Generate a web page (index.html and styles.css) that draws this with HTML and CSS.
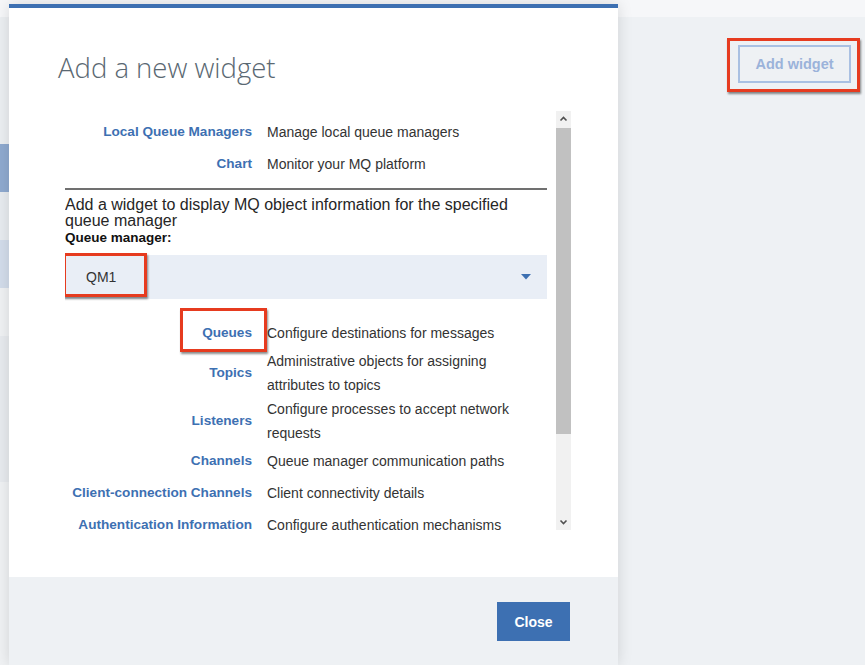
FILE: index.html
```html
<!DOCTYPE html>
<html lang="en">
<head>
<meta charset="utf-8">
<title>Add a new widget</title>
<link rel="stylesheet" href="styles.css">
</head>
<body>
<div class="page">
  <div class="topbar"></div>
  <div class="main">
    <nav class="sidebar">
      <div class="nav-item nav-top"></div>
      <div class="nav-item nav-active"></div>
      <div class="nav-item"></div>
      <div class="nav-item nav-hover"></div>
      <div class="nav-item nav-light"></div>
      <div class="nav-item nav-tall"></div>
      <div class="nav-item nav-light nav-rest"></div>
    </nav>
    <div class="dashboard">
      <div class="toolbar">
        <div class="callout-wrap">
          <button class="btn-ghost" type="button">Add widget</button>
        </div>
      </div>
    </div>
  </div>
</div>

<div class="modal">
  <div class="modal-body">
    <h1 class="modal-title">Add a new widget</h1>
    <div class="scroll-area">
      <div class="scroll-content">
        <div class="row"><a class="label">Local Queue Managers</a><span class="desc">Manage local queue managers</span></div>
        <div class="row"><a class="label">Chart</a><span class="desc">Monitor your MQ platform</span></div>
        <hr class="divider">
        <p class="intro">Add a widget to display MQ object information for the specified queue manager</p>
        <div class="field-label">Queue manager:</div>
        <div class="select">
          <span class="select-value">QM1</span>
          <svg class="caret" width="10" height="6" viewBox="0 0 10 6"><polygon points="0,0 10,0 5,5.5" fill="#3d70b2"/></svg>
          <span class="callout callout-qm"></span>
        </div>
        <div class="rows">
          <div class="row"><a class="label">Queues</a><span class="desc">Configure destinations for messages</span><span class="callout callout-queues"></span></div>
          <div class="row"><a class="label">Topics</a><span class="desc">Administrative objects for assigning attributes to topics</span></div>
          <div class="row"><a class="label">Listeners</a><span class="desc">Configure processes to accept network requests</span></div>
          <div class="row"><a class="label">Channels</a><span class="desc">Queue manager communication paths</span></div>
          <div class="row"><a class="label">Client-connection Channels</a><span class="desc">Client connectivity details</span></div>
          <div class="row"><a class="label">Authentication Information</a><span class="desc">Configure authentication mechanisms</span></div>
        </div>
      </div>
      <div class="scrollbar">
        <div class="sb-btn">
          <svg width="15" height="16" viewBox="0 0 15 16"><polyline points="4.5,9.5 7.5,6.5 10.5,9.5" fill="none" stroke="#505050" stroke-width="1.6"/></svg>
        </div>
        <div class="sb-track"><div class="sb-thumb"></div></div>
        <div class="sb-btn">
          <svg width="15" height="16" viewBox="0 0 15 16"><polyline points="4.5,6.5 7.5,9.5 10.5,6.5" fill="none" stroke="#505050" stroke-width="1.6"/></svg>
        </div>
      </div>
    </div>
  </div>
  <div class="modal-footer">
    <button class="btn-primary" type="button">Close</button>
  </div>
</div>
</body>
</html>
```

FILE: styles.css
```css
* { box-sizing: border-box; }

html, body {
  margin: 0;
  padding: 0;
}

body {
  width: 865px;
  height: 665px;
  overflow: hidden;
  position: relative;
  font-family: "Liberation Sans", Arial, sans-serif;
  background: #eef1f4;
  color: #333;
}

/* ---------- background page ---------- */
.page {
  display: flex;
  flex-direction: column;
  height: 665px;
}

.topbar {
  height: 17px;
  flex: none;
  background: #f6f7f9;
}

.main {
  flex: 1;
  display: flex;
}

.sidebar {
  width: 240px;
  flex: none;
  display: flex;
  flex-direction: column;
  background: #eceff2;
}

.nav-item {
  height: 48px;
  background: #e8ecf0;
}
.nav-top { height: 127px; background: #eceff2; }
.nav-active { background: #8faad0; }
.nav-hover { background: #d3ddeb; }
.nav-light { background: #f0f2f4; }
.nav-tall { height: 146px; background: #e8ebef; }
.nav-rest { flex: 1; }

.dashboard {
  flex: 1;
  background: #eef1f4;
}

.toolbar {
  display: flex;
  justify-content: flex-end;
  padding: 21px 5px 0 0;
}

.callout-wrap {
  border: 3px solid #e63b1f;
  padding: 4px 6px 6px 8px;
  box-shadow: 1px 2px 2px rgba(0, 0, 0, 0.45);
}

.btn-ghost {
  display: block;
  width: 113px;
  height: 38px;
  border: 2px solid #a9c0e2;
  background: transparent;
  color: #9bb3da;
  font-family: "Liberation Sans", Arial, sans-serif;
  font-weight: bold;
  font-size: 14.5px;
  padding: 0;
}

/* ---------- modal ---------- */
.modal {
  position: absolute;
  left: 9px;
  top: 4px;
  width: 609px;
  height: 661px;
  display: flex;
  flex-direction: column;
  background: #fff;
  border-top: 4px solid #3d70b2;
  box-shadow: 0 0 14px rgba(0, 0, 0, 0.13);
}

.modal-body {
  flex: 1;
  padding: 42px 47px 0 49px;
}

.modal-title {
  margin: 0;
  font-family: "Open Sans", "Liberation Sans", sans-serif;
  font-weight: 300;
  font-size: 27.5px;
  line-height: 36px;
  color: #5a6872;
}

.scroll-area {
  margin: 25px 0 0 7px;
  height: 422px;
  display: flex;
  gap: 9px;
}

.scroll-content {
  flex: 1;
  overflow: hidden;
  padding-top: 5px;
}

.row {
  position: relative;
  display: grid;
  grid-template-columns: 187px 1fr;
  column-gap: 15px;
  align-items: center;
  min-height: 32px;
  line-height: 24px;
}

.label {
  text-align: right;
  color: #3d70b2;
  font-weight: bold;
  font-size: 13.6px;
  white-space: nowrap;
}

.desc {
  font-size: 14px;
  color: #333;
}

.divider {
  margin: 8px 0 0;
  border: 0;
  height: 2px;
  background: #707070;
}

.intro {
  margin: 7px 0 0;
  font-size: 16px;
  line-height: 16px;
  color: #262626;
}

.field-label {
  font-weight: bold;
  font-size: 13.5px;
  line-height: 17px;
  color: #111;
}

.select {
  position: relative;
  margin-top: 9px;
  height: 44px;
  display: flex;
  align-items: center;
  justify-content: space-between;
  padding: 0 16px 0 21px;
  background: #e9eef6;
}

.select-value {
  font-size: 14px;
  color: #333;
}

.caret { display: block; }

.rows {
  margin-top: 18px;
}

/* red annotation boxes laid over the content */
.callout {
  position: absolute;
  border: 3px solid #e63b1f;
  box-shadow: 1px 2px 2px rgba(0, 0, 0, 0.45);
}

.callout-qm {
  left: -2px;
  top: -2px;
  width: 84px;
  height: 44px;
}

.callout-queues {
  left: 115px;
  top: -9px;
  width: 87px;
  height: 44px;
}

/* drawn scrollbar */
.scrollbar {
  width: 15px;
  flex: none;
  display: flex;
  flex-direction: column;
  background: #f1f1f1;
  margin-bottom: 3px;
}

.sb-btn {
  height: 16px;
  flex: none;
}
.sb-btn svg { display: block; }

.sb-track {
  flex: 1;
  padding-top: 1px;
}

.sb-thumb {
  height: 306px;
  background: #c1c1c1;
}

/* footer */
.modal-footer {
  height: 88px;
  flex: none;
  display: flex;
  justify-content: flex-end;
  align-items: flex-start;
  padding: 25px 48px 0 0;
  background: #eef1f4;
}

.btn-primary {
  width: 73px;
  height: 39px;
  border: 0;
  background: #3d70b2;
  color: #fff;
  font-family: "Liberation Sans", Arial, sans-serif;
  font-weight: bold;
  font-size: 14px;
  padding: 0;
}
```
